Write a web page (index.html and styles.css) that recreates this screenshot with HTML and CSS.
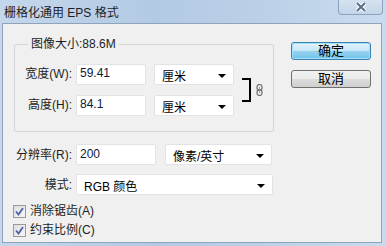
FILE: index.html
```
<!DOCTYPE html>
<html lang="zh-CN">

<head>
	<meta charset="UTF-8">
	<title>栅格化通用 EPS 格式</title>
	<link rel="stylesheet" href="styles.css">
</head>

<body>
	<div class="window">
		<div class="titlebar">
			<span class="title">栅格化通用 EPS 格式</span>
			<div class="close">
				<svg width="14" height="10" viewBox="0 0 14 10">
					<path d="M3 1 L11 9 M11 1 L3 9" stroke="#fff" stroke-width="4" />
					<path d="M3 1 L11 9 M11 1 L3 9" stroke="#5b6f86" stroke-width="2" />
				</svg>
			</div>
		</div>

		<div class="client">
			<div class="main">
				<fieldset class="group">
					<legend>图像大小:88.6M</legend>
					<div class="size">
						<div class="rows">
							<div class="row">
								<label class="lbl">宽度(W):</label>
								<input class="field w70" type="text" value="59.41">
								<div class="select w80"><span>厘米</span><i class="arrow"></i></div>
							</div>
							<div class="row">
								<label class="lbl">高度(H):</label>
								<input class="field w70" type="text" value="84.1">
								<div class="select w80"><span>厘米</span><i class="arrow"></i></div>
							</div>
						</div>
						<div class="bracket"></div>
						<svg class="chain" width="7" height="12" viewBox="0 0 7 12">
							<rect x="1" y="0.5" width="5" height="6" rx="2.5" fill="none" stroke="#6d6d6d" stroke-width="1.2" />
							<rect x="1" y="5.5" width="5" height="6" rx="2.5" fill="none" stroke="#6d6d6d" stroke-width="1.2" />
							<line x1="3.5" y1="3" x2="3.5" y2="9" stroke="#9a9a9a" stroke-width="1" />
						</svg>
					</div>
				</fieldset>

				<div class="row res">
					<label class="lbl">分辨率(R):</label>
					<input class="field w80" type="text" value="200">
					<div class="select w107"><span>像素/英寸</span><i class="arrow"></i></div>
				</div>
				<div class="row">
					<label class="lbl">模式:</label>
					<div class="select w197"><span>RGB 颜色</span><i class="arrow"></i></div>
				</div>

				<div class="checks">
					<label class="check"><span class="box"><svg width="9" height="9" viewBox="0 0 9 9"><path d="M1 4.5 L3.5 7.5 L8 1" fill="none" stroke="#4c63a8" stroke-width="1.8" /></svg></span>消除锯齿(A)</label>
					<label class="check"><span class="box"><svg width="9" height="9" viewBox="0 0 9 9"><path d="M1 4.5 L3.5 7.5 L8 1" fill="none" stroke="#4c63a8" stroke-width="1.8" /></svg></span>约束比例(C)</label>
				</div>
			</div>

			<div class="buttons">
				<button class="btn default">确定</button>
				<button class="btn">取消</button>
			</div>
		</div>
	</div>
</body>

</html>
```

FILE: styles.css
```
* {
	box-sizing: border-box;
}

body {
	margin: 0;
	width: 385px;
	height: 246px;
	overflow: hidden;
	font-family: "Liberation Sans", "Noto Sans CJK SC", sans-serif;
	font-size: 12px;
	color: #000;
}

.window {
	height: 246px;
	display: flex;
	flex-direction: column;
	background: linear-gradient(90deg, #c4d7ec 0%, #b3cae3 40%, #bcd1e8 70%, #c9dbee 100%);
	padding: 0 3px 3px 2px;
}

/* title */

.titlebar {
	height: 23px;
	display: flex;
	align-items: center;
	justify-content: space-between;
	padding-left: 2px;
}

.title {
	font-size: 12px;
	color: #1e1e1e;
	margin-top: -1px;
}

.close {
	align-self: flex-start;
	width: 45px;
	height: 15px;
	margin-right: -1px;
	display: flex;
	align-items: center;
	justify-content: center;
	border: 1px solid #8ea3bb;
	border-top: none;
	border-radius: 0 0 4px 4px;
	background: linear-gradient(#d5e2f0, #c3d5e9);
}

/* client area */

.client {
	flex: 1;
	display: flex;
	background: #f0f0f0;
	border: 1px solid #8fa3ba;
	padding: 0 0 0 11px;
}

.main {
	width: 260px;
}

.group {
	margin: 13px 0 0 0;
	padding: 12px 0 15px 0;
	border: 1px solid #d5d5d5;
	border-radius: 2px;
	min-width: 0;
}

.group legend {
	margin-left: 13px;
	padding: 0 3px;
	line-height: 14px;
	color: #1e1e1e;
}

.size {
	display: flex;
	align-items: center;
}

.rows {
	display: flex;
	flex-direction: column;
	gap: 9px;
}

.row {
	display: flex;
	align-items: center;
}

.lbl {
	width: 58px;
	text-align: right;
	margin-right: 4px;
	line-height: 14px;
	color: #1e1e1e;
}

.group .lbl {
	width: 57px;
}

.field {
	height: 21px;
	border: 1px solid #e3e3e3;
	border-radius: 2px;
	background: #fff;
	padding: 0 3px 2px;
	font: inherit;
	color: #0c1a3a;
	outline: none;
}

.select {
	height: 21px;
	display: flex;
	align-items: center;
	justify-content: space-between;
	border: 1px solid #e3e3e3;
	border-radius: 2px;
	background: #fff;
	padding: 2px 7px 0 7px;
	margin-left: 8px;
}

.arrow {
	width: 0;
	height: 0;
	border-left: 4px solid transparent;
	border-right: 4px solid transparent;
	border-top: 4px solid #000;
}

.w70 {
	width: 70px;
}

.w80 {
	width: 80px;
}

.w107 {
	width: 107px;
	margin-left: 9px;
}

.w197 {
	width: 197px;
	margin-left: 0;
}

.row .select.w80 {
	margin-top: 1px;
}

.bracket {
	width: 9px;
	height: 24px;
	margin-left: 8px;
	border: 2px solid #000;
	border-left: none;
}

.chain {
	margin-left: 5px;
	margin-top: 1px;
}

.res {
	margin-top: 12px;
}

.res + .row {
	margin-top: 9px;
}

/* checkboxes */

.checks {
	display: flex;
	flex-direction: column;
	gap: 6px;
	margin-top: 10px;
	margin-left: -1px;
}

.check {
	display: flex;
	align-items: center;
	gap: 4px;
	height: 13px;
	line-height: 13px;
	color: #1e1e1e;
}

.box {
	width: 13px;
	height: 13px;
	display: flex;
	align-items: center;
	justify-content: center;
	border: 1px solid #9a9a9a;
	background: linear-gradient(135deg, #dedede, #f6f6f6);
}

/* buttons */

.buttons {
	display: flex;
	flex-direction: column;
	gap: 10px;
	margin: 18px 0 0 17px;
}

.btn {
	width: 80px;
	height: 18px;
	padding: 0;
	font: inherit;
	font-size: 13px;
	line-height: 14px;
	color: #000;
	border: 1px solid #707070;
	border-radius: 3px;
	background: linear-gradient(#f2f2f2 0%, #ebebeb 50%, #dddddd 51%, #cfcfcf 100%);
}

.btn.default {
	border-color: #3c7fb1;
	background: linear-gradient(#e5f4fc 0%, #c4e5f6 50%, #98d1ef 51%, #6fc4ea 100%);
	box-shadow: inset 0 0 0 1px #9ee3fb;
}
```
